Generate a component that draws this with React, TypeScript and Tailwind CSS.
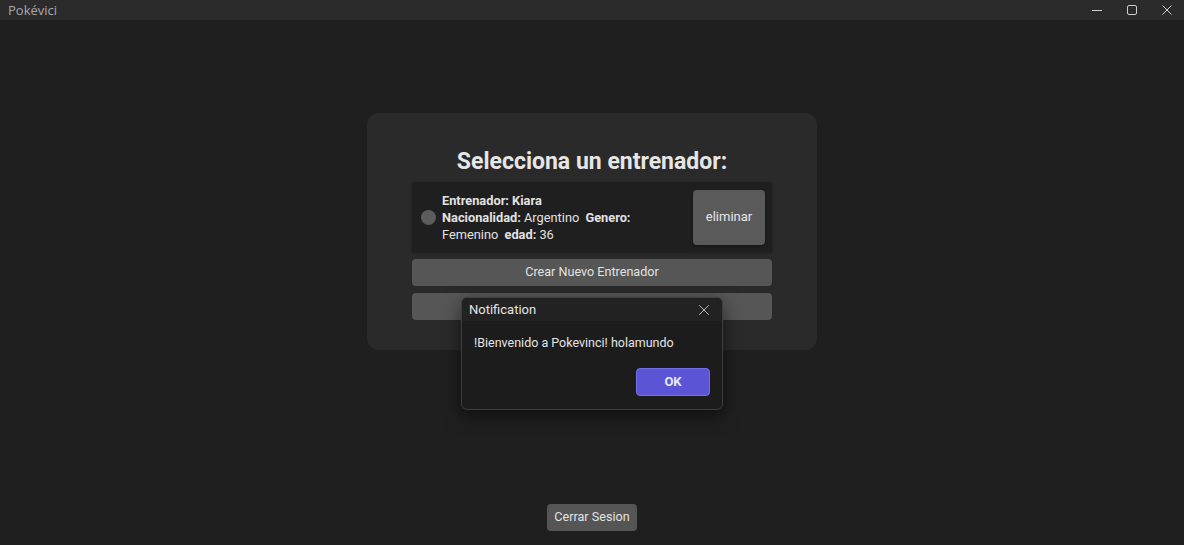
import { X } from 'lucide-react';

function TitleBar() {
  return (
    <div className="h-5 bg-[#2b2b2b] flex items-center justify-between shrink-0">
      <span className="pl-2 text-[13px] text-[#a9a9a9] font-['Open_Sans',sans-serif] leading-none">Pokévici</span>
      <div className="flex items-center h-full text-[#cfcfcf]">
        <div className="w-[35px] h-full flex items-center justify-center">
          <svg width="12" height="12" viewBox="0 0 12 12"><path d="M1 6.5h10" stroke="currentColor" strokeWidth="1" /></svg>
        </div>
        <div className="w-[35px] h-full flex items-center justify-center">
          <svg width="12" height="12" viewBox="0 0 12 12"><rect x="1.5" y="1.5" width="9" height="9" rx="1.5" fill="none" stroke="currentColor" strokeWidth="1" /></svg>
        </div>
        <div className="w-[35px] h-full flex items-center justify-center">
          <svg width="12" height="12" viewBox="0 0 12 12"><path d="M1.5 1.5l9 9M10.5 1.5l-9 9" stroke="currentColor" strokeWidth="1" /></svg>
        </div>
      </div>
    </div>
  );
}

function TrainerRow() {
  return (
    <div className="bg-[#1f1f1f] rounded-[2px] h-[70px] flex items-center pl-[9px] pr-[7px] shadow-[0_1px_3px_rgba(0,0,0,0.3)]">
      <div className="w-[15px] h-[15px] rounded-full bg-[#5c5c5c] shrink-0" />
      <div className="ml-[6px] text-[12.8px] leading-[17px] text-[#e2e2e2]">
        <b className="font-bold">Entrenador: Kiara</b>
        <br />
        <b className="font-bold">Nacionalidad:</b> Argentino <b className="font-bold ml-[3px]">Genero:</b>
        <br />
        Femenino <b className="font-bold ml-[3px]">edad:</b> 36
      </div>
      <div className="flex-1" />
      <button className="w-[72px] h-[55px] rounded-[4px] bg-[#5a5a5a] text-[13px] text-[#e6e6e6] shadow-[0_1px_3px_rgba(0,0,0,0.4)]">
        eliminar
      </button>
    </div>
  );
}

function NotificationDialog() {
  return (
    <div className="absolute left-[461px] top-[297px] w-[262px] h-[113px] rounded-[6px] border border-[#3e3e3e] bg-[#1c1c1c] shadow-[0_6px_18px_rgba(0,0,0,0.5)] overflow-hidden flex flex-col">
      <div className="h-[23px] bg-[#222222] flex items-center justify-between pl-[7px] pr-[9px]">
        <span className="text-[13px] text-[#e4e4e4]">Notification</span>
        <X size={18} strokeWidth={1.1} className="text-[#d8d8d8]" />
      </div>
      <div className="pl-[12px] pt-[14px] text-[12.5px] text-[#e4e4e4] leading-[16px]">!Bienvenido a Pokevinci! holamundo</div>
      <div className="flex justify-end pr-[12px] mt-[17px]">
        <button className="w-[74px] h-[28px] rounded-[4px] bg-[#5b55d6] border border-[#7670e6] text-[13px] font-bold text-[#e8e8f8]">
          OK
        </button>
      </div>
    </div>
  );
}

export default function App() {
  return (
    <div className="relative w-[1184px] h-[545px] bg-[#1f1f1f] flex flex-col overflow-hidden font-['Roboto',sans-serif]">
      <TitleBar />
      <div className="flex-1 flex flex-col items-center pt-[93px]">
        <div className="w-[450px] h-[237px] rounded-[12px] bg-[#2a2a2a] px-[45px] pt-[34px]">
          <h1 className="text-center text-[23px] font-bold text-[#e6e6e6] leading-[30px]">Selecciona un entrenador:</h1>
          <div className="mt-[5px] flex flex-col gap-[7px]">
            <TrainerRow />
            <button className="h-[27px] rounded-[4px] bg-[#565656] text-[12.6px] text-[#e2e2e2]">Crear Nuevo Entrenador</button>
            <button className="h-[27px] rounded-[4px] bg-[#565656] text-[12.6px] text-[#e2e2e2]">Ingresar</button>
          </div>
        </div>
        <div className="flex-1" />
        <button className="mb-[14px] w-[90px] h-[27px] rounded-[4px] bg-[#555555] text-[12.6px] text-[#e2e2e2]">Cerrar Sesion</button>
      </div>
      <NotificationDialog />
    </div>
  );
}
